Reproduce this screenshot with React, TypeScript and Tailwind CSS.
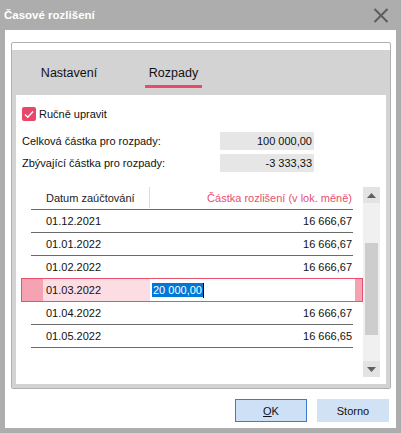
import React from 'react';

type Row = { date: string; amount: string };

const rowsTop: Row[] = [
  { date: '01.12.2021', amount: '16 666,67' },
  { date: '01.01.2022', amount: '16 666,67' },
];

const rowsBottom: Row[] = [
  { date: '01.04.2022', amount: '16 666,67' },
  { date: '01.05.2022', amount: '16 666,65' },
];

function CloseIcon() {
  return (
    <svg width="16" height="15" viewBox="0 0 16 15" fill="none">
      <path d="M1.5 1 L14.5 14 M14.5 1 L1.5 14" stroke="#5c5c5c" strokeWidth="2" />
    </svg>
  );
}

function CheckBox() {
  return (
    <div className="w-[14px] h-[14px] rounded-[2px] bg-[#e8476a] flex items-center justify-center">
      <svg width="10" height="9" viewBox="0 0 10 9" fill="none">
        <path d="M1 4.5 L3.8 7.2 L9 1.5" stroke="#fff" strokeWidth="1.4" />
      </svg>
    </div>
  );
}

function Arrow({ up }: { up?: boolean }) {
  return (
    <svg width="9" height="5" viewBox="0 0 9 5">
      <path d={up ? 'M0 5 L4.5 0 L9 5 Z' : 'M0 0 L4.5 5 L9 0 Z'} fill="#606060" />
    </svg>
  );
}

function DataRow({ row, last }: { row: Row; last?: boolean }) {
  return (
    <div
      className={
        'mx-[10px] flex items-center ' +
        (last ? 'h-[22px]' : 'h-[23px] border-b border-[#6b6b6b]')
      }
    >
      <span className="w-[118px] pl-[15px]">{row.date}</span>
      <span className="flex-1 text-right pr-[1px]">{row.amount}</span>
    </div>
  );
}

export default function App() {
  return (
    <div
      className="w-[401px] h-[433px] bg-[#adadad] flex flex-col text-[11px] leading-[14px] text-[#111]"
      style={{ fontFamily: '"Liberation Sans", Arial, sans-serif' }}
    >
      {/* title bar */}
      <div className="h-[30px] flex items-center justify-between pl-[4px] pr-[12px]">
        <span className="text-white font-bold text-[11.5px] leading-[16px]">Časové rozlišení</span>
        <CloseIcon />
      </div>

      <div className="flex-1 mx-[5px] mb-[5px] bg-white flex flex-col">
        {/* group box */}
        <div className="mt-[12px] ml-[6px] mr-[5px] h-[347px] border border-[#b0b0b0] rounded-[2px] pt-[7px] flex flex-col">
          <div className="flex-1 bg-[#d3d3d3] flex flex-col px-[4px] pb-[4px]">
            {/* tabs */}
            <div className="h-[45px] flex items-start pt-[15px] pl-[25px] text-[12.5px]">
              <div className="flex flex-col items-center w-[56px]">
                <span className="leading-[16px] h-[16px]">Nastavení</span>
              </div>
              <div className="ml-[48px] flex flex-col items-center w-[57px]">
                <span className="leading-[16px] h-[16px]">Rozpady</span>
                <div className="mt-[4px] h-[3px] w-[57px] bg-[#e84a6b]" />
              </div>
            </div>

            {/* tab body */}
            <div className="flex-1 bg-white flex flex-col pt-[12px]">
              <label className="ml-[6px] flex items-center gap-[3px] h-[14px]">
                <CheckBox />
                <span>Ručně upravit</span>
              </label>

              <div className="mt-[11px] ml-[6px] flex flex-col gap-[4px]">
                <div className="flex items-center h-[18px]">
                  <span className="w-[198px]">Celková částka pro rozpady:</span>
                  <div className="w-[94px] h-[18px] bg-[#e6e6e6] rounded-[1px] text-right pr-[2px] leading-[18px]">
                    100 000,00
                  </div>
                </div>
                <div className="flex items-center h-[18px]">
                  <span className="w-[198px]">Zbývající částka pro rozpady:</span>
                  <div className="w-[94px] h-[18px] bg-[#e6e6e6] rounded-[1px] text-right pr-[2px] leading-[18px]">
                    -3 333,33
                  </div>
                </div>
              </div>

              {/* grid with scrollbar */}
              <div className="mt-[15px] ml-[5px] flex">
                <div className="w-[342px] flex flex-col">
                  <div className="mx-[10px] h-[23px] border-b border-[#6b6b6b] flex items-start">
                    <span className="w-[118px] pl-[15px] h-[22px] leading-[22px] text-[#222]">Datum zaúčtování</span>
                    <div className="w-px h-[21px] bg-[#dcdcdc]" />
                    <span className="flex-1 text-right pr-[1px] h-[22px] leading-[22px] text-[#e8506e]">
                      Částka rozlišení (v lok. měně)
                    </span>
                  </div>
                  {rowsTop.map((r) => (
                    <DataRow key={r.date} row={r} />
                  ))}
                  <DataRow row={{ date: '01.02.2022', amount: '16 666,67' }} last />

                  {/* row in edit mode */}
                  <div className="h-[24px] border border-[#e8526f] flex">
                    <div className="w-[21px] bg-[#f5a3b2]" />
                    <div className="w-[107px] bg-[#fddde4] pl-[3px] flex items-center">01.03.2022</div>
                    <div className="flex-1 bg-white flex items-center pl-[2px]">
                      <span className="bg-[#0078d7] text-white leading-[14px] px-[1px]">20 000,00</span>
                      <span className="w-px h-[15px] bg-black" />
                    </div>
                    <div className="w-[7px] bg-[#f5a3b2]" />
                  </div>

                  {rowsBottom.map((r) => (
                    <DataRow key={r.date} row={r} />
                  ))}
                </div>

                {/* vertical scrollbar */}
                <div className="w-[17px] h-[190px] bg-[#f0f0f0] flex flex-col">
                  <div className="h-[16px] bg-[#e3e3e3] flex items-center justify-center">
                    <Arrow up />
                  </div>
                  <div className="flex-1 relative">
                    <div className="absolute left-[2px] right-[2px] top-[40px] h-[92px] bg-[#cdcdcd]" />
                  </div>
                  <div className="h-[16px] bg-[#e3e3e3] flex items-center justify-center">
                    <Arrow />
                  </div>
                </div>
              </div>
            </div>
          </div>
        </div>

        {/* dialog buttons */}
        <div className="mt-[10px] flex justify-end gap-[10px] pr-[7px]">
          <button className="w-[72px] h-[23px] bg-[#cde0f5] border border-[#3c7cd0] flex items-center justify-center">
            <span>
              <span className="underline">O</span>K
            </span>
          </button>
          <button className="w-[72px] h-[23px] bg-[#d1e2f4] flex items-center justify-center">Storno</button>
        </div>
      </div>
    </div>
  );
}
